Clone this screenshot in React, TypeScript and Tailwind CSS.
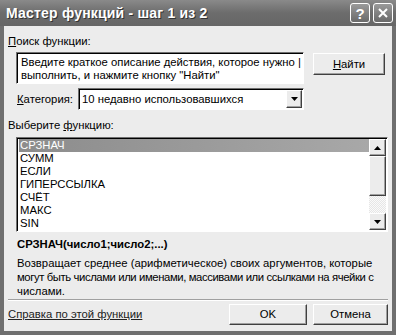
import React from "react";

const font = { fontFamily: '"Liberation Sans", Arial, sans-serif' };

function TitleButton({ children }: { children: React.ReactNode }) {
  return (
    <div className="w-[20px] h-[20px] rounded-[3px] border border-white bg-gradient-to-b from-[#9a9a9a] to-[#6a6a6a] flex items-center justify-center text-white">
      {children}
    </div>
  );
}

function Btn({ children, className = "" }: { children: React.ReactNode; className?: string }) {
  return (
    <div
      className={
        "flex items-center justify-center bg-[#ececec] border border-t-white border-l-white border-r-[#404040] border-b-[#404040] shadow-[inset_-1px_-1px_0_#a0a0a0] text-black " +
        className
      }
    >
      {children}
    </div>
  );
}

const items = ["СРЗНАЧ", "СУММ", "ЕСЛИ", "ГИПЕРССЫЛКА", "СЧЁТ", "МАКС", "SIN"];

export default function App() {
  return (
    <div className="w-[396px] h-[335px] bg-[#6f6f6f] flex flex-col select-none" style={font}>
      {/* title bar */}
      <div className="h-[26px] flex items-center pl-[6px] pr-[3px] bg-gradient-to-b from-[#8a8a8a] via-[#6c6c6c] to-[#666666]">
        <span className="text-white font-bold text-[14px] [text-shadow:1px_1px_0_#333] tracking-[0.2px]">
          Мастер функций - шаг 1 из 2
        </span>
        <div className="ml-auto flex gap-[3px]">
          <TitleButton>
            <span className="text-[15px] font-bold leading-none">?</span>
          </TitleButton>
          <TitleButton>
            <svg width="12" height="12" viewBox="0 0 12 12">
              <path d="M2 2 L10 10 M10 2 L2 10" stroke="white" strokeWidth="2" />
            </svg>
          </TitleButton>
        </div>
      </div>

      {/* body */}
      <div className="flex-1 mx-[4px] mb-[4px] bg-[#ececec] pl-[4px] text-[11.3px] text-black flex flex-col whitespace-nowrap">
        <div className="mt-[9px] h-[13px] leading-[13px]">
          <span className="underline">П</span>оиск функции:
        </div>

        <div className="mt-[4px] flex items-start">
          <div className="ml-[8px] w-[288px] h-[32px] bg-white border border-t-[#707070] border-l-[#707070] border-r-white border-b-white shadow-[inset_1px_1px_0_#000] pl-[4px] pt-[3px] leading-[13px]">
            <div>
              Введите краткое описание действия, которое нужно <span className="font-light">|</span>
            </div>
            <div>выполнить, и нажмите кнопку "Найти"</div>
          </div>
          <Btn className="ml-[9px] mt-[1px] w-[72px] h-[22px]">
            <span>
              <span className="underline">Н</span>айти
            </span>
          </Btn>
        </div>

        <div className="mt-[4px] flex items-center">
          <span className="ml-[9px] w-[61px]">
            <span className="underline">К</span>атегория:
          </span>
          <div className="w-[226px] h-[22px] bg-white border border-t-[#707070] border-l-[#707070] border-r-white border-b-white shadow-[inset_1px_1px_0_#000] flex items-center pl-[3px]">
            <span>10 недавно использовавшихся</span>
            <Btn className="ml-auto mr-[1px] w-[16px] h-[18px]">
              <svg width="7" height="4" viewBox="0 0 7 4">
                <path d="M0 0 H7 L3.5 4 Z" fill="black" />
              </svg>
            </Btn>
          </div>
        </div>

        <div className="mt-[9px] h-[13px] leading-[13px]">
          Выберите <span className="underline">ф</span>ункцию:
        </div>

        <div className="mt-[5px] ml-[8px] w-[372px] h-[95px] bg-white border border-t-[#707070] border-l-[#707070] border-r-white border-b-white shadow-[inset_1px_1px_0_#000] flex p-[1px] pl-[2px]">
          <div className="flex-1 flex flex-col leading-[13px]">
            {items.map((it, i) => (
              <div
                key={it}
                className={
                  "h-[13px] pl-[1px] " +
                  (i === 0 ? "bg-gradient-to-r from-[#8c8c8c] to-[#a8a8a8] text-white" : "")
                }
              >
                {it}
              </div>
            ))}
          </div>
          <div className="w-[17px] flex flex-col bg-[repeating-conic-gradient(#e6e6e6_0_25%,#fafafa_0_50%)] bg-[length:2px_2px]">
            <Btn className="h-[17px]">
              <svg width="7" height="4" viewBox="0 0 7 4">
                <path d="M0 4 H7 L3.5 0 Z" fill="black" />
              </svg>
            </Btn>
            <Btn className="h-[40px]">{""}</Btn>
            <div className="flex-1" />
            <Btn className="h-[17px]">
              <svg width="7" height="4" viewBox="0 0 7 4">
                <path d="M0 0 H7 L3.5 4 Z" fill="black" />
              </svg>
            </Btn>
          </div>
        </div>

        <div className="mt-[5px] ml-[9px] font-bold h-[14px] leading-[14px]">СРЗНАЧ(число1;число2;...)</div>
        <div className="mt-[5px] ml-[9px] leading-[14px]">
          <div>Возвращает среднее (арифметическое) своих аргументов, которые</div>
          <div className="tracking-[-0.4px]">могут быть числами или именами, массивами или ссылками на ячейки с</div>
          <div>числами.</div>
        </div>

        <div className="mt-auto mr-[4px] h-[2px] border-t border-t-[#a0a0a0] border-b border-b-white" />

        <div className="mt-[3px] mb-[6px] flex items-center mr-[4px]">
          <span className="underline text-[#222]">Справка по этой функции</span>
          <Btn className="ml-auto w-[78px] h-[21px]">OK</Btn>
          <Btn className="ml-[6px] w-[75px] h-[21px]">Отмена</Btn>
        </div>
      </div>
    </div>
  );
}
